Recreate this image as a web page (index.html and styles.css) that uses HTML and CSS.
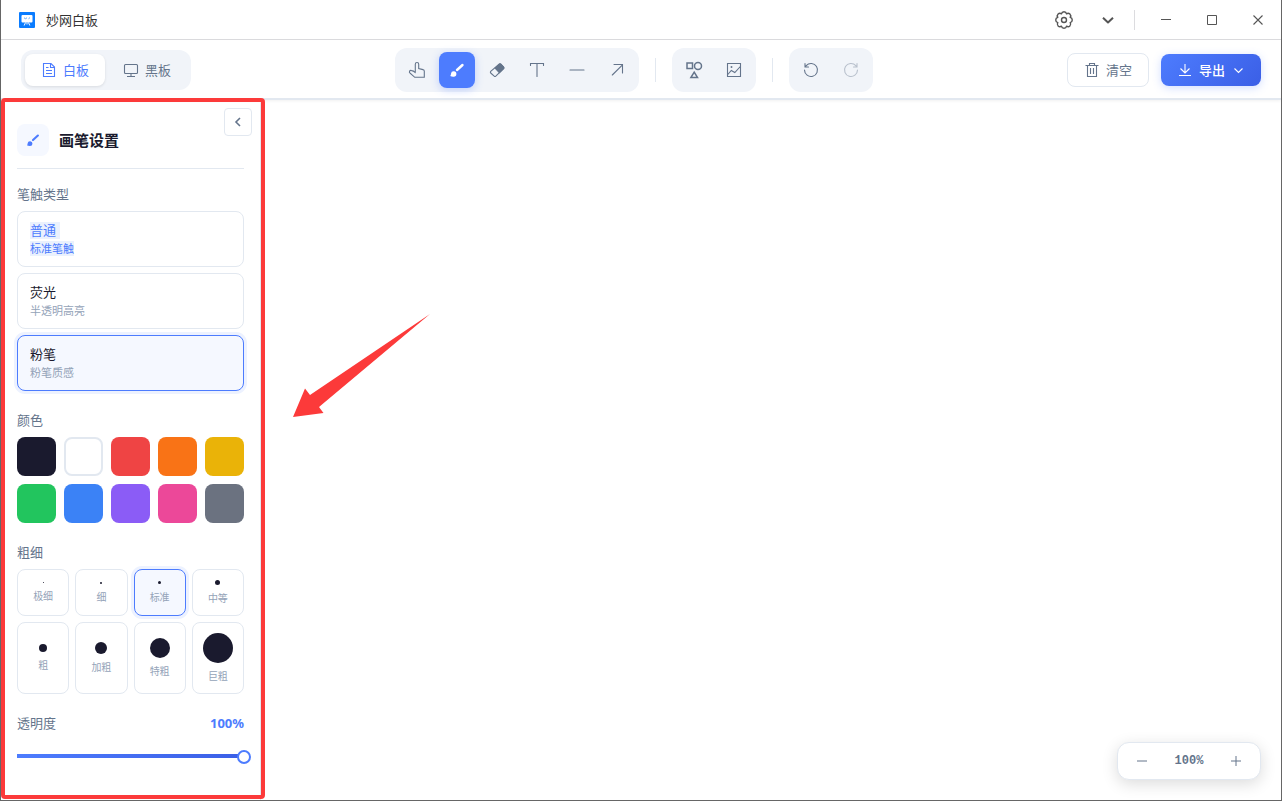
FILE: index.html
```html
<!DOCTYPE html>
<html lang="zh-CN">
<head>
<meta charset="utf-8">
<title>妙网白板</title>
<link rel="stylesheet" href="styles.css">
</head>
<body>
<div class="window">
  <header class="titlebar">
    <svg class="logo" width="16" height="16" viewBox="0 0 16 16" aria-hidden="true"><rect width="16" height="16" rx="1" fill="#0a7cff"/><rect x="2.500" y="3" width="11" height="7.500" rx="1" fill="#fff"/><path d="M5 5.800l1.500.9L8 5.800M9.500 6.800l1.500-1.200" fill="none" stroke="#4a9dff" stroke-width=".9"/><path d="M6.500 10.500l-1.300 3M9.500 10.500l1.300 3M8 10.500v2" stroke="#fff" stroke-width="1"/></svg>
    <h1 class="app-name">妙网白板</h1>
    <div class="title-tools">
      <button class="title-btn" aria-label="设置"><svg width="20" height="20" viewBox="0 0 20 20"><path d="M16.200 7.440a2.620 2.620 0 0 1 0 5.120a2.620 2.620 0 0 1-3.640 3.640a2.620 2.620 0 0 1-5.120 0a2.620 2.620 0 0 1-3.640-3.640a2.620 2.620 0 0 1 0-5.120a2.620 2.620 0 0 1 3.640-3.640a2.620 2.620 0 0 1 5.120 0a2.620 2.620 0 0 1 3.640 3.640z"/><circle cx="10" cy="10" r="2.500"/></svg></button>
      <button class="title-btn" aria-label="更多"><svg width="20" height="20" viewBox="0 0 20 20"><path d="M5 7.800l5 4.700 5-4.700" stroke-width="2"/></svg></button>
      <span class="title-sep"></span>
      <button class="title-btn win" aria-label="最小化"><svg width="12" height="12" viewBox="0 0 12 12"><path d="M1 5.500h10" stroke-width="1"/></svg></button>
      <button class="title-btn win" aria-label="最大化"><svg width="12" height="12" viewBox="0 0 12 12"><path d="M1.500 1.500h9v9h-9z" stroke-width="1"/></svg></button>
      <button class="title-btn win" aria-label="关闭"><svg width="12" height="12" viewBox="0 0 12 12"><path d="M1.500 1.500l9 9M10.500 1.500l-9 9" stroke-width="1.100"/></svg></button>
    </div>
  </header>

  <nav class="toolbar">
    <div class="segment">
      <button class="seg-btn active"><svg width="16" height="16" viewBox="0 0 16 16"><path d="M2.500 1.500h7.500l3.500 3.500v9.500h-11zM9.500 1.500v4h4M5 5.500h2.500M5 8.500h6M5 11.500h6"/></svg>白板</button>
      <button class="seg-btn"><svg width="16" height="16" viewBox="0 0 16 16"><rect x="1.500" y="2.500" width="13" height="9" rx="1"/><path d="M8 11.500v3M4 14.500h8"/></svg>黑板</button>
    </div>
    <div class="tools">
      <div class="tool-group">
        <button class="tool" aria-label="选择"><svg width="18" height="18" viewBox="0 0 18 18"><path d="M7.300 10.500V3.200a1.700 1.700 0 0 1 3.400 0v4.300l4.300 1.100a1.600 1.600 0 0 1 1.300 1.600V16.300H6.800L2.200 12.300a1.500 1.500 0 0 1 1.300-2.700q2 0 3.800 2"/></svg></button>
        <button class="tool active" aria-label="画笔"><svg width="18" height="18" viewBox="0 0 18 18"><path d="M9 9l5.500-5" stroke-width="2.400"/><path class="fill-only" d="M2.200 14.900q.8-.6.800-2.200a2.700 2.700 0 1 1 2.700 3q-2 .1-3.500-.8z"/></svg></button>
        <button class="tool" aria-label="橡皮"><svg width="18" height="18" viewBox="0 0 18 18"><path d="M11.200 3.100q.8-.7 1.600 0l2.800 3q.7.800 0 1.600l-7.800 7.500q-.8.700-1.600 0L2.700 12q-.7-.8 0-1.600z"/><path class="fill" d="M7 7.100l4.200-4q.8-.7 1.600 0l2.800 3q.7.800 0 1.600l-4.200 4z"/></svg></button>
        <button class="tool" aria-label="文字"><svg width="18" height="18" viewBox="0 0 18 18"><path d="M2.500 4.500v-2h13v2M9 2.500v13"/></svg></button>
        <button class="tool" aria-label="直线"><svg width="18" height="18" viewBox="0 0 18 18"><path d="M2 9h14"/></svg></button>
        <button class="tool" aria-label="箭头"><svg width="18" height="18" viewBox="0 0 18 18"><path d="M4.300 14L14.500 3.800M6 3.500h8.500V12"/></svg></button>
      </div>
      <span class="tool-sep"></span>
      <div class="tool-group">
        <button class="tool" aria-label="图形"><svg width="18" height="18" viewBox="0 0 18 18"><g stroke-width="1.500"><rect x="2" y="2" width="5.500" height="5.500"/><circle cx="13" cy="4.900" r="3.500"/><path d="M9.200 11.200l3.300 5.300H5.900z"/></g></svg></button>
        <button class="tool" aria-label="图片"><svg width="18" height="18" viewBox="0 0 18 18"><path d="M2.500 2.500h13v13h-13zM2.800 13.500l3.500-4 3.500 2 5.500-6"/><circle class="fill" cx="6.500" cy="6" r=".4"/></svg></button>
      </div>
      <span class="tool-sep"></span>
      <div class="tool-group">
        <button class="tool" aria-label="撤销"><svg width="18" height="18" viewBox="0 0 18 18"><path d="M2.500 9a6.500 6.500 0 1 0 1.700-4.400L3.200 5.700M3 2.500v3.500h3.500"/></svg></button>
        <button class="tool" disabled aria-label="重做"><svg width="18" height="18" viewBox="0 0 18 18"><path d="M15.500 9a6.500 6.500 0 1 1-1.700-4.400l1 1.100M15 2.500v3.500h-3.500"/></svg></button>
      </div>
    </div>
    <div class="actions">
      <button class="clear-btn"><svg width="16" height="16" viewBox="0 0 16 16"><path d="M1.500 3.500h13M5.500 3.500v-2h5v2M3.500 3.500v11h9v-11M6.500 6v6M9.500 6v6"/></svg>清空</button>
      <button class="export-btn"><svg width="16" height="16" viewBox="0 0 16 16"><path d="M8 2v9M3.500 6.500L8 11l4.500-4.500M2 13.500h12"/></svg>导出<svg width="14" height="14" viewBox="0 0 14 14"><path d="M3.500 5.500l4 4 4-4"/></svg></button>
    </div>
  </nav>

  <main class="workspace">
    <aside class="panel">
      <button class="collapse" aria-label="收起"><svg width="14" height="14" viewBox="0 0 14 14"><path d="M9 3L5 7l4 4"/></svg></button>
      <div class="panel-head">
        <span class="panel-icon"><svg width="16" height="16" viewBox="0 0 18 18"><path d="M9 9l5.500-5" stroke-width="2.400"/><path class="fill-only" d="M2.200 14.900q.8-.6.800-2.200a2.700 2.700 0 1 1 2.700 3q-2 .1-3.500-.8z"/></svg></span>
        <h2 class="panel-title">画笔设置</h2>
      </div>
      <section class="section">
        <h3 class="label">笔触类型</h3>
        <div class="options">
          <button class="option marked"><span class="opt-name">普通</span><span class="opt-desc">标准笔触</span></button>
          <button class="option"><span class="opt-name">荧光</span><span class="opt-desc">半透明高亮</span></button>
          <button class="option active"><span class="opt-name">粉笔</span><span class="opt-desc">粉笔质感</span></button>
        </div>
      </section>
      <section class="section">
        <h3 class="label">颜色</h3>
        <div class="swatches">
          <button class="swatch ink" aria-label="黑"></button>
          <button class="swatch white" aria-label="白"></button>
          <button class="swatch red" aria-label="红"></button>
          <button class="swatch orange" aria-label="橙"></button>
          <button class="swatch yellow" aria-label="黄"></button>
          <button class="swatch green" aria-label="绿"></button>
          <button class="swatch blue" aria-label="蓝"></button>
          <button class="swatch purple" aria-label="紫"></button>
          <button class="swatch pink" aria-label="粉"></button>
          <button class="swatch gray" aria-label="灰"></button>
        </div>
      </section>
      <section class="section">
        <h3 class="label">粗细</h3>
        <div class="sizes">
          <button class="size"><i class="dot d1"></i>极细</button>
          <button class="size"><i class="dot d2"></i>细</button>
          <button class="size active"><i class="dot d3"></i>标准</button>
          <button class="size"><i class="dot d5"></i>中等</button>
          <button class="size"><i class="dot d8"></i>粗</button>
          <button class="size"><i class="dot d12"></i>加粗</button>
          <button class="size"><i class="dot d20"></i>特粗</button>
          <button class="size"><i class="dot d30"></i>巨粗</button>
        </div>
      </section>
      <section class="section">
        <div class="opacity-head"><label class="label" for="opacity">透明度</label><output class="opacity-value" for="opacity">100%</output></div>
        <input class="slider" id="opacity" type="range" min="0" max="100" value="100">
      </section>
    </aside>
    <div class="canvas">
      <svg class="pointer-arrow" width="140" height="106" viewBox="0 0 140 106" aria-hidden="true"><path d="M1 105L13 76.500L18 83L138 2L27 95L31.500 101z" fill="#fc3a3a"/></svg>
      <div class="zoom">
        <button class="zoom-btn" aria-label="缩小"><svg width="14" height="14" viewBox="0 0 14 14"><path d="M2 7h10"/></svg></button>
        <span class="zoom-value">100%</span>
        <button class="zoom-btn" aria-label="放大"><svg width="14" height="14" viewBox="0 0 14 14"><path d="M2 7h10M7 2v10"/></svg></button>
      </div>
    </div>
  </main>
  <div class="highlight-frame"></div>
</div>
</body>
</html>
```
FILE: styles.css
```css
* { box-sizing: border-box; }

body {
  margin: 0;
  background: #fff;
  color: #1a1a2e;
  font-family: "Noto Sans", "Noto Sans CJK SC", sans-serif;
  font-size: 13px;
  line-height: 18px;
}

h1, h2, h3 { margin: 0; font-weight: 400; }

button {
  margin: 0;
  padding: 0;
  border: 0;
  background: none;
  color: inherit;
  font: inherit;
  display: flex;
  align-items: center;
  justify-content: center;
}

svg {
  flex: none;
  display: block;
  fill: none;
  stroke: currentColor;
  stroke-width: 1.1;
}

.fill { fill: currentColor; }
.fill-only { fill: currentColor; stroke: none; }
.logo { stroke: none; }
.pointer-arrow { stroke: none; }

.window {
  position: relative;
  min-height: 100vh;
  display: flex;
  flex-direction: column;
  border: 1px solid #666;
  border-top: 0;
}

.titlebar {
  height: 40px;
  display: flex;
  align-items: center;
  padding-left: 18px;
  border-bottom: 1px solid #dcdcdf;
}

.app-name { margin-left: 11px; font-size: 13px; color: #333; }
.title-tools { margin-left: auto; display: flex; align-items: center; color: #555; }
.title-btn { width: 44px; height: 38px; stroke-linejoin: round; }
.title-btn svg { stroke-width: 1.4; }
.title-btn.win { width: 46px; stroke-linejoin: miter; }
.title-sep { width: 1px; height: 20px; margin: 0 8px 0 4px; background: #dcdcdf; }

.toolbar {
  position: relative;
  display: flex;
  align-items: center;
  justify-content: space-between;
  padding: 8px 20px 6px;
  border-bottom: 2px solid #e2e8f0;
  box-shadow: 0 1px 3px rgba(0, 0, 0, 0.06);
}

.segment {
  display: flex;
  gap: 2px;
  padding: 4px;
  border-radius: 12px;
  background: #f1f4f9;
}

.seg-btn {
  gap: 6px;
  height: 32px;
  padding: 0 16px;
  border-radius: 8px;
  color: #64748b;
}

.seg-btn.active {
  background: #fff;
  color: #4d7cfe;
  box-shadow: 0 1px 3px rgba(0, 0, 0, 0.1);
}

.tools { display: flex; align-items: center; gap: 16px; margin-left: 10px; }
.tool-group { display: flex; gap: 4px; padding: 4px; border-radius: 12px; background: #f1f4f9; }
.tool { width: 36px; height: 36px; border-radius: 8px; color: #64748b; stroke-linecap: round; }
.tool.active { background: #4d7cfe; color: #fff; box-shadow: 0 2px 8px rgba(77, 124, 254, 0.3); }
.tool:disabled { opacity: 0.4; }
.tool-sep { width: 1px; height: 24px; background: #e2e8f0; }

.actions { display: flex; align-items: center; gap: 12px; }

.clear-btn {
  gap: 6px;
  height: 34px;
  padding: 0 16px;
  border: 1px solid #e2e8f0;
  border-radius: 8px;
  color: #64748b;
}

.export-btn {
  gap: 6px;
  height: 32px;
  padding: 0 16px;
  border-radius: 8px;
  background: linear-gradient(135deg, #4d7cfe, #3b5fe6);
  color: #fff;
  font-weight: 500;
  box-shadow: 0 2px 8px rgba(77, 124, 254, 0.25);
}

.workspace { flex: 1; display: flex; }

.panel {
  position: relative;
  flex: none;
  width: 260px;
  padding: 24px 16px;
  display: flex;
  flex-direction: column;
  gap: 20px;
  border-right: 1px solid #e2e8f0;
}

.collapse {
  position: absolute;
  top: 8px;
  right: 8px;
  width: 28px;
  height: 28px;
  border: 1px solid #e2e8f0;
  border-radius: 4px;
  color: #64748b;
}
.collapse svg { stroke-width: 1.6; }

.panel-head {
  display: flex;
  align-items: center;
  gap: 10px;
  padding-bottom: 12px;
  margin-bottom: -4px;
  border-bottom: 1px solid #e2e8f0;
}

.panel-icon {
  width: 32px;
  height: 32px;
  display: flex;
  align-items: center;
  justify-content: center;
  border-radius: 8px;
  background: #f5f8ff;
  color: #4d7cfe;
  stroke-linecap: round;
}

.panel-title { font-size: 15px; line-height: 20px; font-weight: 700; }
.section { display: flex; flex-direction: column; gap: 8px; }
.label { font-size: 13px; line-height: 18px; color: #64748b; }

.options { display: flex; flex-direction: column; gap: 6px; }

.option {
  flex-direction: column;
  align-items: flex-start;
  gap: 2px;
  padding: 10px 12px;
  border: 1px solid #e2e8f0;
  border-radius: 8px;
}

.option.active,
.size.active {
  border-color: #4d7cfe;
  background: #f5f8ff;
  box-shadow: 0 0 0 3px #edf2ff;
}

.opt-name { line-height: 17px; }
.opt-desc { font-size: 11px; line-height: 15px; color: #94a3b8; }
.marked .opt-name, .marked .opt-desc { background: #eaf1fd; color: #4d7cfe; }
.marked .opt-name { padding-right: 4px; }

.swatches { display: grid; grid-template-columns: repeat(5, 1fr); gap: 8px; }
.swatch { aspect-ratio: 1; border-radius: 8px; }
.ink { background: #1a1a2e; }
.white { background: #fff; border: 2px solid #e2e8f0; }
.red { background: #ef4444; }
.orange { background: #f97316; }
.yellow { background: #eab308; }
.green { background: #22c55e; }
.blue { background: #3b82f6; }
.purple { background: #8b5cf6; }
.pink { background: #ec4899; }
.gray { background: #6b7280; }

.sizes { display: grid; grid-template-columns: repeat(4, 1fr); gap: 6px; }

.size {
  flex-direction: column;
  gap: 6px;
  padding: 10px 0;
  border: 1px solid #e2e8f0;
  border-radius: 8px;
  color: #94a3b8;
  font-size: 10px;
  line-height: 14px;
}

.dot { border-radius: 50%; background: #1a1a2e; }
.d1 { width: 1px; height: 1px; }
.d2 { width: 2px; height: 2px; }
.d3 { width: 3px; height: 3px; }
.d5 { width: 5px; height: 5px; }
.d8 { width: 8px; height: 8px; }
.d12 { width: 12px; height: 12px; }
.d20 { width: 20px; height: 20px; }
.d30 { width: 30px; height: 30px; }

.opacity-head { display: flex; justify-content: space-between; align-items: center; }
.opacity-value { font-weight: 700; line-height: 16px; color: #4d7cfe; }

.slider {
  appearance: none;
  width: auto;
  height: 14px;
  margin: 10px -7px 0;
  background: linear-gradient(90deg, #4d7cfe, #3b5fe6) no-repeat 7px 4px / calc(100% - 14px) 4px;
}

.slider::-webkit-slider-thumb {
  appearance: none;
  width: 14px;
  height: 14px;
  border: 2px solid #4d7cfe;
  border-radius: 50%;
  background: #fff;
}

.canvas { position: relative; flex: 1; }
.pointer-arrow { position: absolute; left: 31px; top: 212px; }

.zoom {
  position: absolute;
  right: 20px;
  bottom: 20px;
  display: flex;
  align-items: center;
  padding: 4px 10px;
  border: 1px solid #e2e8f0;
  border-radius: 12px;
  background: #fff;
  color: #64748b;
  box-shadow: 0 4px 16px rgba(0, 0, 0, 0.14);
}

.zoom-btn { width: 28px; height: 28px; }
.zoom-btn svg { stroke-width: 1; }

.zoom-value {
  width: 66px;
  text-align: center;
  font: 700 12px/18px "Liberation Mono", monospace;
}

.highlight-frame {
  position: absolute;
  top: 98px;
  bottom: 1px;
  left: 0;
  width: 264px;
  border: 4px solid #fc3a3a;
  border-radius: 4px;
  pointer-events: none;
}
```
